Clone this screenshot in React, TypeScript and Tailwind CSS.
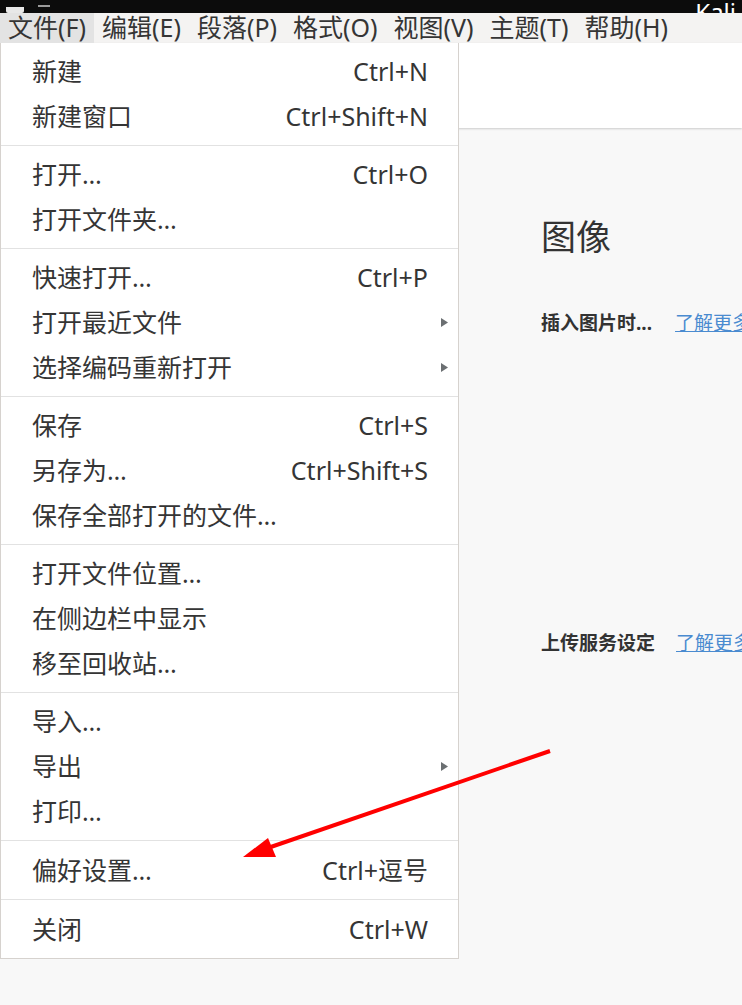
import React from "react";

type Item = { label: string; shortcut?: string; sub?: boolean };

const groups: Item[][] = [
  [
    { label: "新建", shortcut: "Ctrl+N" },
    { label: "新建窗口", shortcut: "Ctrl+Shift+N" },
  ],
  [
    { label: "打开…", shortcut: "Ctrl+O" },
    { label: "打开文件夹…" },
  ],
  [
    { label: "快速打开…", shortcut: "Ctrl+P" },
    { label: "打开最近文件", sub: true },
    { label: "选择编码重新打开", sub: true },
  ],
  [
    { label: "保存", shortcut: "Ctrl+S" },
    { label: "另存为…", shortcut: "Ctrl+Shift+S" },
    { label: "保存全部打开的文件…" },
  ],
  [
    { label: "打开文件位置…" },
    { label: "在侧边栏中显示" },
    { label: "移至回收站…" },
  ],
  [
    { label: "导入…" },
    { label: "导出", sub: true },
    { label: "打印…" },
  ],
  [{ label: "偏好设置…", shortcut: "Ctrl+逗号" }],
  [{ label: "关闭", shortcut: "Ctrl+W" }],
];

const menus = ["文件(F)", "编辑(E)", "段落(P)", "格式(O)", "视图(V)", "主题(T)", "帮助(H)"];

const font = "font-['Noto_Sans','Noto_Sans_CJK_SC',sans-serif]";

function Row({ item }: { item: Item }) {
  return (
    <div
      className={`flex h-[45px] items-center justify-between pl-[31px] ${
        item.sub ? "pr-[10px]" : "pr-[30px]"
      }`}
    >
      <span>{item.label}</span>
      {item.shortcut && <span>{item.shortcut}</span>}
      {item.sub && (
        <svg width="7" height="9" viewBox="0 0 7 9">
          <path d="M0 0 L7 4.5 L0 9 Z" fill="#6b6f72" />
        </svg>
      )}
    </div>
  );
}

export default function App() {
  return (
    <div
      className={`relative h-[1005px] w-[742px] overflow-hidden bg-[#f8f8f8] text-[#353535] ${font}`}
    >
      {/* top system bar */}
      <div className="flex h-[13px] items-end justify-between overflow-hidden bg-[#0c0c0c]">
        <div className="ml-[6px] flex items-end gap-[14px]">
          <div className="h-[6px] w-[18px] rounded-b-[2px] bg-[#e8e8e8]" />
          <div className="mb-[6px] h-[2px] w-[12px] bg-[#9a9a9a]" />
        </div>
        <span className="mr-[6px] -mb-[12px] text-[24px] leading-[26px] text-white">Kali</span>
      </div>

      {/* menubar */}
      <div className="flex h-[30px] items-center bg-[#f4f3f2] text-[25px]">
        {menus.map((m, i) => (
          <div
            key={m}
            className={`flex h-[30px] items-center px-[8px] ${i === 0 ? "bg-[#e3e3e3]" : ""}`}
          >
            {m}
          </div>
        ))}
      </div>

      {/* editor header strip */}
      <div className="h-[85px] bg-white shadow-[0_1px_2px_rgba(0,0,0,0.18)]" />

      {/* preferences content */}
      <div className="pl-[541px] pt-[86px]">
        <div className="text-[35px] leading-[46px] text-[#333]">图像</div>
        <div className="mt-[50px] flex h-[26px] items-center whitespace-nowrap">
          <span className="text-[19px] font-bold text-[#333]">插入图片时...</span>
          <span className="ml-[23px] text-[19px] text-[#4a8bd0] underline">了解更多</span>
        </div>
        <div className="mt-[294px] flex h-[26px] items-center whitespace-nowrap">
          <span className="text-[19px] font-bold text-[#333]">上传服务设定</span>
          <span className="ml-[21px] text-[19px] text-[#4a8bd0] underline">了解更多</span>
        </div>
      </div>

      {/* dropdown menu */}
      <div className="absolute left-0 top-[43px] w-[459px] border border-t-0 border-[#d6d2ce] bg-white text-[25px]">
        {groups.map((g, gi) => (
          <div
            key={gi}
            className={`${gi >= 6 ? "pt-[7px] pb-[6px]" : "py-[6px]"} ${
              gi > 0 ? "border-t border-[#e2e2e2]" : ""
            }`}
          >
            {g.map((it) => (
              <Row key={it.label} item={it} />
            ))}
          </div>
        ))}
      </div>

      {/* red annotation arrow */}
      <svg
        className="pointer-events-none absolute left-0 top-0"
        width="742"
        height="1005"
        viewBox="0 0 742 1005"
      >
        <line x1="550" y1="751" x2="262" y2="850" stroke="#ff0000" strokeWidth="4" />
        <path d="M243 857 L268 838 L276 857 Z" fill="#ff0000" />
      </svg>
    </div>
  );
}
